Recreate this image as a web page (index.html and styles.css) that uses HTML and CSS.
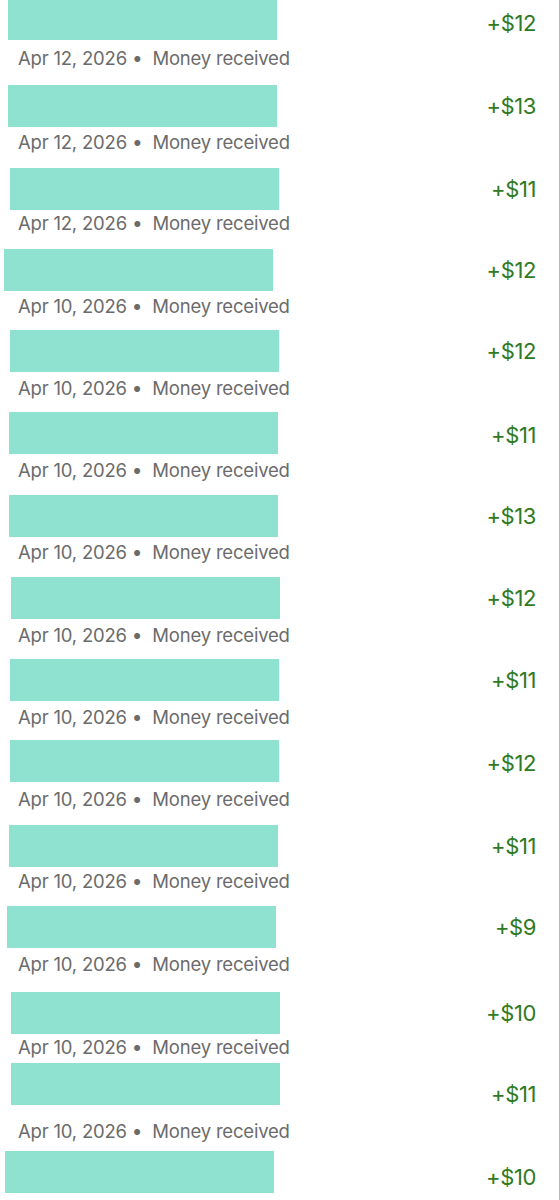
FILE: index.html
```html
<!DOCTYPE html>
<html lang="en">
<head>
  <meta charset="UTF-8">
  <meta name="viewport" content="width=device-width, initial-scale=1.0">
  <title>Activity</title>
  <link rel="stylesheet" href="styles.css">
</head>
<body>
  <div class="activity">
    <div class="txn" style="--x:8px; --m:-2px; --d:6px; --a:8px">
      <div class="txn-name"></div>
      <div class="txn-amount">+$12</div>
      <div class="txn-meta">Apr 12, 2026 <span class="dot">•</span> Money received</div>
    </div>
    <div class="txn" style="--x:8px; --m:15px">
      <div class="txn-name"></div>
      <div class="txn-amount">+$13</div>
      <div class="txn-meta">Apr 12, 2026 <span class="dot">•</span> Money received</div>
    </div>
    <div class="txn" style="--x:10px; --m:14px; --d:1px">
      <div class="txn-name"></div>
      <div class="txn-amount">+$11</div>
      <div class="txn-meta">Apr 12, 2026 <span class="dot">•</span> Money received</div>
    </div>
    <div class="txn" style="--x:4px; --m:14px">
      <div class="txn-name"></div>
      <div class="txn-amount">+$12</div>
      <div class="txn-meta">Apr 10, 2026 <span class="dot">•</span> Money received</div>
    </div>
    <div class="txn" style="--x:10px; --m:12px; --d:4px">
      <div class="txn-name"></div>
      <div class="txn-amount">+$12</div>
      <div class="txn-meta">Apr 10, 2026 <span class="dot">•</span> Money received</div>
    </div>
    <div class="txn" style="--x:9px; --m:12px; --d:4px; --a:4px">
      <div class="txn-name"></div>
      <div class="txn-amount">+$11</div>
      <div class="txn-meta">Apr 10, 2026 <span class="dot">•</span> Money received</div>
    </div>
    <div class="txn" style="--x:9px">
      <div class="txn-name"></div>
      <div class="txn-amount">+$13</div>
      <div class="txn-meta">Apr 10, 2026 <span class="dot">•</span> Money received</div>
    </div>
    <div class="txn" style="--x:11px; --d:4px">
      <div class="txn-name"></div>
      <div class="txn-amount">+$12</div>
      <div class="txn-meta">Apr 10, 2026 <span class="dot">•</span> Money received</div>
    </div>
    <div class="txn" style="--x:10px; --m:12px; --d:4px">
      <div class="txn-name"></div>
      <div class="txn-amount">+$11</div>
      <div class="txn-meta">Apr 10, 2026 <span class="dot">•</span> Money received</div>
    </div>
    <div class="txn" style="--x:10px; --m:11px; --d:5px; --a:4px">
      <div class="txn-name"></div>
      <div class="txn-amount">+$12</div>
      <div class="txn-meta">Apr 10, 2026 <span class="dot">•</span> Money received</div>
    </div>
    <div class="txn" style="--x:9px; --m:14px; --d:2px">
      <div class="txn-name"></div>
      <div class="txn-amount">+$11</div>
      <div class="txn-meta">Apr 10, 2026 <span class="dot">•</span> Money received</div>
    </div>
    <div class="txn" style="--x:7px; --d:4px">
      <div class="txn-name"></div>
      <div class="txn-amount">+$9</div>
      <div class="txn-meta">Apr 10, 2026 <span class="dot">•</span> Money received</div>
    </div>
    <div class="txn" style="--x:11px; --m:16px; --d:1px">
      <div class="txn-name"></div>
      <div class="txn-amount">+$10</div>
      <div class="txn-meta">Apr 10, 2026 <span class="dot">•</span> Money received</div>
    </div>
    <div class="txn" style="--x:11px; --m:4px; --d:12px; --a:18px">
      <div class="txn-name"></div>
      <div class="txn-amount">+$11</div>
      <div class="txn-meta">Apr 10, 2026 <span class="dot">•</span> Money received</div>
    </div>
    <div class="txn" style="--x:5px; --m:8px; --a:10px">
      <div class="txn-name"></div>
      <div class="txn-amount">+$10</div>
    </div>
  </div>
</body>
</html>
```

FILE: styles.css
```css
body {
  margin: 0;
  padding: 0;
  background-color: #ffffff;
  font-family: Inter, "Noto Sans", sans-serif;
}
.activity {
  box-sizing: border-box;
  width: 560px;
  height: 1200px;
  border-right: 1px solid #b8b8b8;
  overflow: hidden;
}
.txn {
  display: grid;
  grid-template-columns: 1fr auto;
  margin-top: var(--m, 13px);
}
.txn-name {
  width: 269px;
  height: 42px;
  margin-left: var(--x, 9px);
  background-color: #8ee2cf;
}
.txn-amount {
  align-self: center;
  padding-top: var(--a, 0px);
  padding-right: 23px;
  color: #2f7a22;
  font-size: 22px;
  letter-spacing: -0.4px;
}
.txn-meta {
  grid-column: 1 / -1;
  height: 24px;
  margin-top: var(--d, 3px);
  padding-left: 18px;
  color: #6b6b6b;
  font-size: 18.5px;
  line-height: 24px;
  letter-spacing: -0.2px;
  white-space: nowrap;
}
.dot {
  display: inline-block;
  font-size: 19px;
  line-height: 1;
  margin: 0 5px 0 0;
}
```
